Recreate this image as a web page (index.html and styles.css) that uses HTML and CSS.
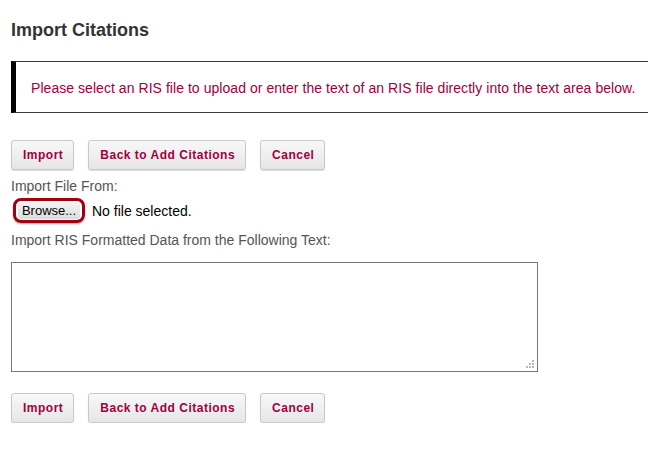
FILE: index.html
```html
<!DOCTYPE html>
<html>
<head>
<meta charset="utf-8">
<link rel="stylesheet" href="styles.css">
</head>
<body>
<div class="page">
  <h1 class="title">Import Citations</h1>
  <div class="notice">Please select an RIS file to upload or enter the text of an RIS file directly into the text area below.</div>
  <div class="actions top">
    <button class="btn">Import</button>
    <button class="btn">Back to Add Citations</button>
    <button class="btn">Cancel</button>
  </div>
  <div class="label">Import File From:</div>
  <div class="file-row">
    <span class="browse-wrap"><span class="browse">Browse...</span></span>
    <span class="file-name">No file selected.</span>
  </div>
  <div class="label label2">Import RIS Formatted Data from the Following Text:</div>
  <div class="text-box">
    <svg class="grip" width="8" height="8" viewBox="0 0 8 8"><rect x="6" y="0" width="2" height="2" fill="#bbb"/><rect x="3" y="3" width="2" height="2" fill="#bbb"/><rect x="6" y="3" width="2" height="2" fill="#bbb"/><rect x="0" y="6" width="2" height="2" fill="#bbb"/><rect x="3" y="6" width="2" height="2" fill="#bbb"/><rect x="6" y="6" width="2" height="2" fill="#bbb"/></svg>
  </div>
  <div class="actions bottom">
    <button class="btn">Import</button>
    <button class="btn">Back to Add Citations</button>
    <button class="btn">Cancel</button>
  </div>
</div>
</body>
</html>
```
FILE: styles.css
```css
html, body {
  margin: 0;
  padding: 0;
  background: #fff;
  overflow: hidden;
}
.page {
  width: 680px;
  padding: 0 0 0 11px;
  font-family: "Liberation Sans", Arial, sans-serif;
}
.title {
  margin: 0;
  padding-top: 19px;
  height: 61px;
  box-sizing: border-box;
  font-size: 18px;
  line-height: 22px;
  font-weight: bold;
  color: #333;
}
.notice {
  height: 52px;
  box-sizing: border-box;
  border: 1px solid #3a3a3a;
  border-left: 5px solid #000;
  padding: 1px 0 0 15px;
  display: flex;
  align-items: center;
  font-size: 14px;
  letter-spacing: 0.05px;
  color: #a10040;
}
.actions {
  display: flex;
  gap: 14px;
}
.actions.top {
  margin-top: 27px;
}
.actions.bottom {
  margin-top: 21px;
}
.btn {
  height: 30px;
  box-sizing: border-box;
  padding: 0 10px 0 11px;
  border: 1px solid #c8c8c8;
  border-radius: 3px;
  background: linear-gradient(#f8f8f8, #e6e6e6);
  box-shadow: 0 1px 1px rgba(0,0,0,0.15);
  font-family: "Liberation Sans", Arial, sans-serif;
  font-size: 12px;
  font-weight: bold;
  letter-spacing: 0.5px;
  color: #a10040;
}
.label {
  margin-top: 8px;
  font-size: 14px;
  line-height: 17px;
  color: #555;
}
.file-row {
  display: flex;
  align-items: center;
  margin-top: 2px;
  height: 27px;
}
.browse-wrap {
  margin-left: 2px;
  display: inline-flex;
  align-items: center;
  height: 25px;
  width: 72px;
  box-sizing: border-box;
  border: 3px solid #a0000f;
  border-radius: 8px;
  padding: 0 2px;
  box-shadow: 0 1px 2px rgba(0,0,0,0.35);
}
.browse {
  display: block;
  width: 100%;
  height: 17px;
  line-height: 17px;
  text-align: center;
  background: linear-gradient(#f4f4f4, #dcdcdc);
  border-radius: 3px;
  font-size: 13px;
  color: #000;
}
.file-name {
  margin-left: 7px;
  font-size: 14px;
  color: #000;
}
.label2 {
  margin-top: 8px;
}
.text-box {
  position: relative;
  margin-top: 13px;
  width: 527px;
  height: 110px;
  box-sizing: border-box;
  border: 1px solid #777;
  background: #fff;
}
.grip {
  position: absolute;
  right: 3px;
  bottom: 3px;
}
```
